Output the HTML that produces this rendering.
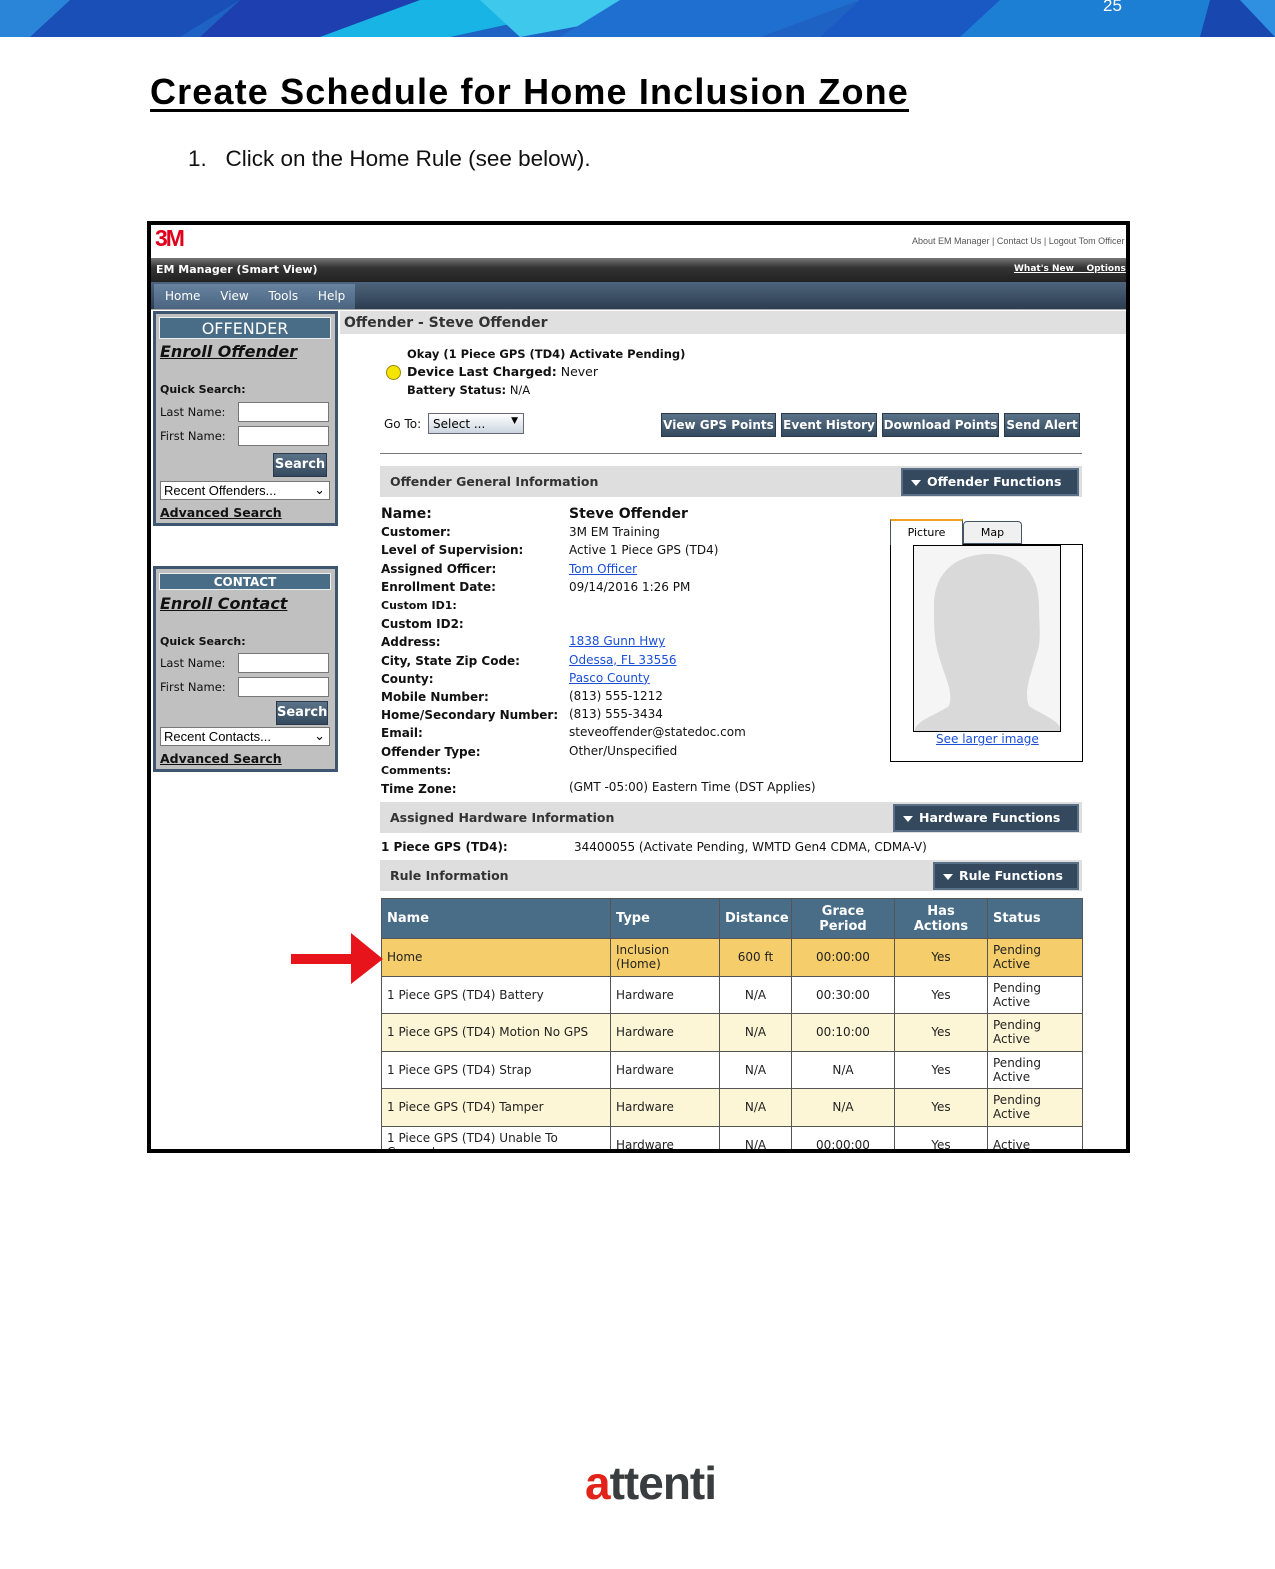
<!DOCTYPE html>
<html><head><meta charset="utf-8"><style>
*{margin:0;padding:0;box-sizing:border-box}
body{width:1275px;height:1569px;position:relative;background:#fff;font-family:"DejaVu Sans",Verdana,sans-serif;overflow:hidden}
.a{position:absolute;white-space:nowrap}
.v{font-family:"DejaVu Sans",sans-serif;font-size:12px;color:#111}
.b{font-weight:bold}
.lnk{color:#1a4fd6;text-decoration:underline}
.btn{position:absolute;background:linear-gradient(#5b7388,#34495e);color:#fff;font-weight:bold;font-size:12px;text-align:center;line-height:22px;border:1px solid #2b3a4a;overflow:hidden}
.bar{position:absolute;background:#dedede;left:380px;width:702px}
.fn{position:absolute;background:#34495e;border:2px solid #5a6f88;color:#fff;font-weight:bold;font-size:12.5px;line-height:24px;padding-left:8px}
.fn:before{content:"";display:inline-block;border-left:5px solid transparent;border-right:5px solid transparent;border-top:6px solid #fff;margin-right:6px;vertical-align:middle}
.inp{position:absolute;background:#fff;border:1px solid #777;height:20px}
table{border-collapse:collapse;position:absolute;left:381px;top:898px;width:701px;font-size:12px;table-layout:fixed}
td,th{border:1px solid #555;padding:0 5px;vertical-align:middle;color:#222}
th{background:#496d87;color:#fff;font-size:13px;height:40px;text-align:center}
td{height:37.5px;line-height:14px}
.c{text-align:center}
</style></head><body>
<svg class="a" style="left:0;top:0" width="1275" height="37">
<rect width="1275" height="37" fill="#1e63c4"/>
<polygon points="0,0 120,0 90,37 0,37" fill="#2a85d8"/>
<polygon points="70,0 240,0 180,37 30,37" fill="#1b4fb8"/>
<polygon points="240,0 480,0 380,37 200,37" fill="#1d3fb0"/>
<polygon points="420,0 620,0 450,37 320,37" fill="#18b4e6"/>
<polygon points="480,0 720,0 520,37" fill="#3ec8ec"/>
<polygon points="620,0 860,0 760,37 560,37" fill="#1f6fd0"/>
<polygon points="860,0 1040,0 980,37 820,37" fill="#1a59c4"/>
<polygon points="1000,0 1230,0 1200,37 960,37" fill="#1c7fd4"/>
<polygon points="1210,0 1240,0 1275,37 1200,37" fill="#1847b0"/>
<polygon points="1240,0 1275,0 1275,37" fill="#2f8fe0"/>
</svg>
<div class="a" style="left:1103px;top:-4px;color:#fff;font-family:'Liberation Sans',sans-serif;font-size:17px">25</div>
<div class="a" style="left:150px;top:71px;font-family:'Liberation Sans',sans-serif;font-weight:bold;font-size:36px;letter-spacing:1.15px;text-decoration:underline;text-decoration-thickness:3px;text-underline-offset:5px">Create Schedule for Home Inclusion Zone</div>
<div class="a" style="left:188px;top:146px;font-family:'Liberation Sans',sans-serif;font-size:22.5px;color:#111">1.&nbsp;&nbsp;&nbsp;Click on the Home Rule (see below).</div>

<div class="a" style="left:147px;top:221px;width:983px;height:932px;border:4px solid #000;background:#fff;overflow:hidden">
<div style="position:relative;left:-151px;top:-225px;width:1275px;height:1160px">
<div class="a" style="left:155px;top:225px;font-family:'Liberation Sans',sans-serif;font-weight:900;font-size:23px;color:#e0001b;letter-spacing:-2px">3M</div>
<div class="a" style="left:912px;top:236px;font-family:'Liberation Sans',sans-serif;font-size:9px;color:#555">About EM Manager | Contact Us | Logout Tom Officer</div>
<div class="a" style="left:151px;top:258px;width:980px;height:24px;background:linear-gradient(#777,#333 40%,#222)"></div>
<div class="a b" style="left:156px;top:263px;color:#fff;font-size:11px">EM Manager (Smart View)</div>
<div class="a b" style="left:1014px;top:264px;color:#fff;font-size:9px;text-decoration:underline">What's New&nbsp;&nbsp;&nbsp;&nbsp;Options</div>
<div class="a" style="left:151px;top:282px;width:980px;height:27px;background:linear-gradient(#4e647c,#2d3d50)"></div>
<div class="a" style="left:154px;top:284px;width:201px;height:25px;background:linear-gradient(#6783a0,#4a6480)"></div>
<div class="a" style="left:165px;top:289px;color:#fff;font-size:12px;word-spacing:16px">Home View Tools Help</div>
<div class="a" style="left:151px;top:309px;width:980px;height:1px;background:#aaa"></div>
<div class="a" style="left:153px;top:311px;width:185px;height:215px;background:#c0c0c0;border:3px solid #3e566f"></div>
<div class="a" style="left:159px;top:317px;width:172px;height:22px;background:#496d87;border:1px solid #eee;color:#fff;font-size:16px;text-align:center;line-height:21px">OFFENDER</div>
<div class="a b lnk" style="left:160px;top:342px;font-size:16px;font-style:italic;color:#111">Enroll Offender</div>
<div class="a v b" style="left:160px;top:383px;font-size:11px">Quick Search:</div>
<div class="a v" style="left:160px;top:405px;font-size:11.5px">Last Name:</div>
<div class="inp" style="left:238px;top:402px;width:91px"></div>
<div class="a v" style="left:160px;top:429px;font-size:11.5px">First Name:</div>
<div class="inp" style="left:238px;top:426px;width:91px"></div>
<div class="btn" style="left:273px;top:453px;width:54px;font-size:13px">Search</div>
<div class="inp" style="left:160px;top:481px;width:170px;height:19px;font-family:'Liberation Sans',sans-serif;font-size:13px;padding-left:3px;line-height:17px">Recent Offenders...<span style="position:absolute;right:4px;top:-1px">&#8964;</span></div>
<div class="a b lnk" style="left:160px;top:505px;font-size:12.5px;color:#111">Advanced Search</div>
<div class="a" style="left:153px;top:566px;width:185px;height:206px;background:#c0c0c0;border:3px solid #3e566f"></div>
<div class="a" style="left:159px;top:573px;width:172px;height:17px;background:#496d87;border:1px solid #eee;color:#fff;font-size:12px;font-weight:bold;text-align:center;line-height:16px">CONTACT</div>
<div class="a b lnk" style="left:160px;top:594px;font-size:16px;font-style:italic;color:#111">Enroll Contact</div>
<div class="a v b" style="left:160px;top:635px;font-size:11px">Quick Search:</div>
<div class="a v" style="left:160px;top:656px;font-size:11.5px">Last Name:</div>
<div class="inp" style="left:238px;top:653px;width:91px"></div>
<div class="a v" style="left:160px;top:680px;font-size:11.5px">First Name:</div>
<div class="inp" style="left:238px;top:677px;width:91px"></div>
<div class="btn" style="left:276px;top:701px;width:52px;font-size:13px">Search</div>
<div class="inp" style="left:160px;top:727px;width:170px;height:19px;font-family:'Liberation Sans',sans-serif;font-size:13px;padding-left:3px;line-height:17px">Recent Contacts...<span style="position:absolute;right:4px;top:-1px">&#8964;</span></div>
<div class="a b lnk" style="left:160px;top:751px;font-size:12.5px;color:#111">Advanced Search</div>
<div class="a" style="left:340px;top:311px;width:790px;height:23px;background:#e0e0e0"></div>
<div class="a b" style="left:344px;top:315px;font-size:14px;color:#333">Offender - Steve Offender</div>
<div class="a v b" style="left:407px;top:347px;font-size:11.5px">Okay (1 Piece GPS (TD4) Activate Pending)</div>
<div class="a" style="left:386px;top:365px;width:15px;height:15px;border-radius:50%;background:#f5e400;border:1px solid #9a8a00"></div>
<div class="a v" style="left:407px;top:364px;font-size:12.5px"><b>Device Last Charged:</b> Never</div>
<div class="a v" style="left:407px;top:383px;font-size:11.5px"><b>Battery Status:</b> N/A</div>
<div class="a v" style="left:384px;top:417px">Go To:</div>
<div class="a" style="left:428px;top:413px;width:96px;height:21px;border:1px solid #667;background:linear-gradient(#fff,#cbd5e0);font-size:12px;padding:3px 0 0 4px">Select ...<span style="position:absolute;right:5px;top:2px;font-size:9px">▼</span></div>
<div class="btn" style="left:661px;top:413px;width:115px">View GPS Points</div>
<div class="btn" style="left:781px;top:413px;width:96px">Event History</div>
<div class="btn" style="left:882px;top:413px;width:117px">Download Points</div>
<div class="btn" style="left:1004px;top:413px;width:76px">Send Alert</div>
<div class="a" style="left:380px;top:453px;width:702px;height:1px;background:#777"></div>
<div class="bar" style="top:466px;height:31px"></div>
<div class="a b" style="left:390px;top:474px;font-size:12.5px;color:#333">Offender General Information</div>
<div class="fn" style="left:901px;top:468px;width:178px;height:28px">Offender Functions</div>
<div class="a v b" style="left:381px;top:505px;line-height:18.2px;font-size:12px">
<span style="font-size:14px">Name:</span><br>Customer:<br>Level of Supervision:<br>Assigned Officer:<br>Enrollment Date:<br><span style="font-size:11px">Custom ID1:</span><br>Custom ID2:<br>Address:<br>City, State Zip Code:<br>County:<br>Mobile Number:<br>Home/Secondary Number:<br>Email:<br>Offender Type:<br><span style="font-size:11px">Comments:</span><br>Time Zone:</div>
<div class="a v" style="left:569px;top:505px;line-height:18.2px;font-size:12px">
<b style="font-size:14px">Steve Offender</b><br>3M EM Training<br>Active 1 Piece GPS (TD4)<br><span class="lnk">Tom Officer</span><br>09/14/2016 1:26 PM<br><br><br><span class="lnk">1838 Gunn Hwy</span><br><span class="lnk">Odessa, FL 33556</span><br><span class="lnk">Pasco County</span><br>(813) 555-1212<br>(813) 555-3434<br>steveoffender@statedoc.com<br>Other/Unspecified<br><br>(GMT -05:00) Eastern Time (DST Applies)</div>
<div class="a" style="left:890px;top:544px;width:193px;height:218px;border:1px solid #000"></div>
<div class="a" style="left:890px;top:519px;width:73px;height:26px;border:1px solid #456;border-top:2px solid #f0a020;border-bottom:none;background:#fff;font-size:11px;text-align:center;line-height:24px">Picture</div>
<div class="a" style="left:963px;top:521px;width:59px;height:23px;border:1px solid #456;border-radius:4px 4px 0 0;background:#f0f0f0;font-size:11px;text-align:center;line-height:21px">Map</div>
<div class="a" style="left:913px;top:545px;width:148px;height:187px;border:1px solid #000;background:#f5f5f5;overflow:hidden">
<svg width="148" height="187"><path d="M20 60 C20 20 50 8 75 8 C105 8 125 25 125 60 C125 80 128 95 122 110 C115 135 110 145 115 160 C130 170 148 175 148 187 L0 187 C0 175 20 170 35 160 C40 145 30 130 25 110 C20 95 20 80 20 60Z" fill="#d9d9d9"/></svg></div>
<div class="a lnk" style="left:936px;top:732px;font-size:12px">See larger image</div>
<div class="bar" style="top:802px;height:31px"></div>
<div class="a b" style="left:390px;top:810px;font-size:12.5px;color:#333">Assigned Hardware Information</div>
<div class="fn" style="left:893px;top:804px;width:186px;height:28px">Hardware Functions</div>
<div class="a v" style="left:381px;top:840px"><b>1 Piece GPS (TD4):</b></div>
<div class="a v" style="left:574px;top:840px">34400055 (Activate Pending, WMTD Gen4 CDMA, CDMA-V)</div>
<div class="bar" style="top:860px;height:31px"></div>
<div class="a b" style="left:390px;top:868px;font-size:12.5px;color:#333">Rule Information</div>
<div class="fn" style="left:933px;top:862px;width:146px;height:28px">Rule Functions</div>
<table>
<colgroup><col style="width:229px"><col style="width:109px"><col style="width:72px"><col style="width:103px"><col style="width:93px"><col style="width:95px"></colgroup>
<tr><th style="text-align:left">Name</th><th style="text-align:left">Type</th><th>Distance</th><th>Grace<br>Period</th><th>Has<br>Actions</th><th style="text-align:left">Status</th></tr>
<tr style="background:#f5cd6a"><td>Home</td><td>Inclusion<br>(Home)</td><td class="c">600 ft</td><td class="c">00:00:00</td><td class="c">Yes</td><td>Pending<br>Active</td></tr>
<tr><td>1 Piece GPS (TD4) Battery</td><td>Hardware</td><td class="c">N/A</td><td class="c">00:30:00</td><td class="c">Yes</td><td>Pending<br>Active</td></tr>
<tr style="background:#fdf6d6"><td>1 Piece GPS (TD4) Motion No GPS</td><td>Hardware</td><td class="c">N/A</td><td class="c">00:10:00</td><td class="c">Yes</td><td>Pending<br>Active</td></tr>
<tr><td>1 Piece GPS (TD4) Strap</td><td>Hardware</td><td class="c">N/A</td><td class="c">N/A</td><td class="c">Yes</td><td>Pending<br>Active</td></tr>
<tr style="background:#fdf6d6"><td>1 Piece GPS (TD4) Tamper</td><td>Hardware</td><td class="c">N/A</td><td class="c">N/A</td><td class="c">Yes</td><td>Pending<br>Active</td></tr>
<tr><td style="vertical-align:top;padding-top:4px">1 Piece GPS (TD4) Unable To<br>Connect</td><td style="vertical-align:top;padding-top:11px">Hardware</td><td class="c" style="vertical-align:top;padding-top:11px">N/A</td><td class="c" style="vertical-align:top;padding-top:11px">00:00:00</td><td class="c" style="vertical-align:top;padding-top:11px">Yes</td><td style="vertical-align:top;padding-top:11px">Active</td></tr>
</table>
<svg class="a" style="left:291px;top:933px" width="94" height="52"><polygon points="0,21 60,21 60,0 92,26 60,51 60,31 0,31" fill="#e8141b"/></svg>
</div></div>
<div class="a" style="left:585px;top:1456px;font-family:'Liberation Sans',sans-serif;font-weight:bold;font-size:46px;letter-spacing:-1px;color:#3a3d40"><span style="color:#e32219">a</span>ttenti</div>
</body></html>
